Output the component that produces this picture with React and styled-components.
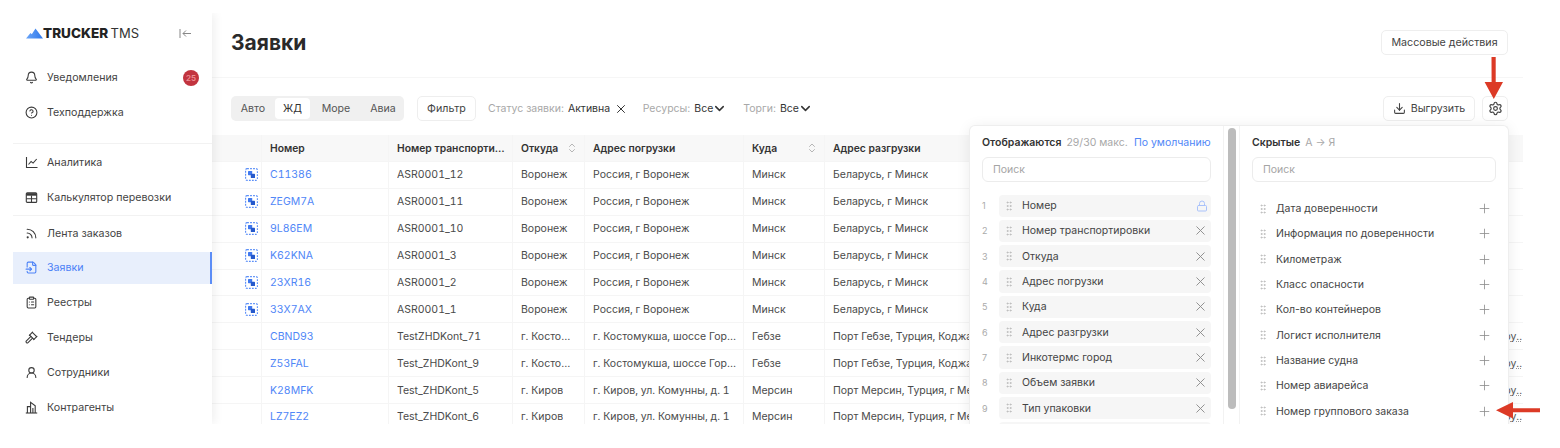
import React from "react";
import styled, { createGlobalStyle } from "styled-components";
import {
  Bell,
  ChevronDown,
  ChevronsUpDown,
  CircleHelp,
  ClipboardList,
  Download,
  FileInput,
  Gavel,
  GripVertical,
  Lock,
  Plus,
  Rss,
  Settings,
  UserRound,
  X,
} from "lucide-react";

function ChartIcon({ size }) {
  return (
    <svg width={size} height={size} viewBox="0 0 13 13" fill="none" stroke="currentColor" strokeWidth="1.1">
      <path d="M1.5 1v10.5h11" />
      <path d="M3.5 8.5l2.6-3 2 1.6 3.6-4.1" />
    </svg>
  );
}

function TableIcon({ size }) {
  return (
    <svg width={size} height={size} viewBox="0 0 13 13" fill="none" stroke="currentColor" strokeWidth="1.1">
      <rect x="1.3" y="1.8" width="10.4" height="9.6" rx="1" />
      <path d="M1.3 3.4h10.4" strokeWidth="2.6" />
      <path d="M1.3 7.8h10.4M6.5 4.5v6.9" />
    </svg>
  );
}

function BuildingIcon({ size }) {
  return (
    <svg width={size} height={size} viewBox="0 0 13 13" fill="none" stroke="currentColor" strokeWidth="1.1">
      <path d="M0.8 12h11.4" />
      <path d="M2.4 12V5.6h3.2" />
      <path d="M5.6 12V1.4l4.6 3.4V12" />
      <path d="M7.9 7v5" />
    </svg>
  );
}

const nav = [
  [{ label: "Уведомления", icon: Bell, badge: 25 }, { label: "Техподдержка", icon: CircleHelp }],
  [{ label: "Аналитика", icon: ChartIcon }, { label: "Калькулятор перевозки", icon: TableIcon }],
  [
    { label: "Лента заказов", icon: Rss },
    { label: "Заявки", icon: FileInput, active: true },
    { label: "Реестры", icon: ClipboardList },
    { label: "Тендеры", icon: Gavel },
    { label: "Сотрудники", icon: UserRound },
    { label: "Контрагенты", icon: BuildingIcon },
  ],
];

const voronezh = ["Воронеж", "Россия, г Воронеж", "Минск", "Беларусь, г Минск"];
const rows = [
  ["C11386", "ASR0001_12", ...voronezh, true],
  ["ZEGM7A", "ASR0001_11", ...voronezh, true],
  ["9L86EM", "ASR0001_10", ...voronezh, true],
  ["K62KNA", "ASR0001_3", ...voronezh, true],
  ["23XR16", "ASR0001_2", ...voronezh, true],
  ["33X7AX", "ASR0001_1", ...voronezh, true],
  ["CBND93", "TestZHDKont_71", "г. Костомукша", "г. Костомукша, шоссе Горняков", "Гебзе", "Порт Гебзе, Турция, Коджаэли", false, "ру.."],
  ["Z53FAL", "Test_ZHDKont_9", "г. Костомукша", "г. Костомукша, шоссе Горняков", "Гебзе", "Порт Гебзе, Турция, Коджаэли", false, "ру.."],
  ["K28MFK", "Test_ZHDKont_5", "г. Киров", "г. Киров, ул. Комунны, д. 1", "Мерсин", "Порт Мерсин, Турция, г Мерсин", false, "ру.."],
  ["LZ7EZ2", "Test_ZHDKont_6", "г. Киров", "г. Киров, ул. Комунны, д. 1", "Мерсин", "Порт Мерсин, Турция, г Мерсин", false, "ру.."],
];

const shown = ["Номер", "Номер транспортировки", "Откуда", "Адрес погрузки", "Куда", "Адрес разгрузки", "Инкотермс город", "Объем заявки", "Тип упаковки", "Вес"];
const hidden = ["Дата доверенности", "Информация по доверенности", "Километраж", "Класс опасности", "Кол-во контейнеров", "Логист исполнителя", "Название судна", "Номер авиарейса", "Номер группового заказа"];

const GlobalStyle = createGlobalStyle`
  html, body {
    margin: 0;
    background: #fff;
    font-family: "Inter", "Liberation Sans", sans-serif;
    color: #3f3f3f;
  }
  * { box-sizing: border-box; }
`;

const Shell = styled.div`
  position: relative;
  width: 1560px;
  height: 448px;
  padding: 13px 37px 24px 0;
  overflow: hidden;
`;

const Frame = styled.div`
  display: flex;
  height: 411px;
  overflow: hidden;
`;

const Sidebar = styled.aside`
  flex: 0 0 212px;
  padding-left: 13px;
  background: #fff;
  box-shadow: 2px 0 10px rgba(0, 0, 0, 0.07);
  position: relative;
  z-index: 2;
`;

const LogoRow = styled.div`
  display: flex;
  align-items: center;
  height: 40px;
  padding: 0 20px 0 13px;
`;

const LogoText = styled.span`
  font-size: 13.5px;
  font-weight: 800;
  color: #222;
`;

const LogoLight = styled.span`
  margin-left: 2.5px;
  font-size: 13px;
  font-weight: 400;
  color: #333;
`;

const Collapse = styled.div`
  margin-left: auto;
  display: flex;
  color: #888;
`;

const NavGroup = styled.div`
  padding: ${(p) => p.$pad || "0"};
  border-bottom: ${(p) => (p.$line ? "1px solid #f2f2f2" : "none")};
`;

const NavItem = styled.div`
  display: flex;
  align-items: center;
  height: ${(p) => (p.$active ? "32px" : "34.8px")};
  margin: ${(p) => (p.$active ? "1.4px 0" : "0")};
  padding-left: 12px;
  gap: 9px;
  font-size: 10.66px;
  color: ${(p) => (p.$active ? "#4c82f7" : "#444")};
  background: ${(p) => (p.$active ? "#e8effc" : "transparent")};
  border-right: ${(p) => (p.$active ? "2px solid #5c8df6" : "none")};

  svg {
    flex: none;
    color: ${(p) => (p.$active ? "#4c82f7" : "#3a3a3a")};
  }
`;

const Badge = styled.span`
  margin-left: auto;
  margin-right: 13px;
  width: 16px;
  height: 16px;
  border-radius: 50%;
  background: #c2343f;
  color: #ee8f94;
  font-size: 8px;
  font-weight: 600;
  display: flex;
  align-items: center;
  justify-content: center;
`;

const Main = styled.main`
  position: relative;
  flex: 1;
  min-width: 0;
`;

const TitleBar = styled.header`
  display: flex;
  align-items: center;
  justify-content: space-between;
  height: 65px;
  padding: 0 15px 6px 19px;
  border-bottom: 1px solid #f6f6f6;
`;

const Title = styled.h1`
  margin: 0;
  font-size: 21px;
  font-weight: 700;
  color: #2a2a2a;
`;

const Button = styled.button`
  display: inline-flex;
  align-items: center;
  justify-content: center;
  gap: 5px;
  height: 25px;
  padding: 0;
  width: ${(p) => p.$width}px;
  border: 1px solid #eeeeee;
  border-radius: 5px;
  background: #fff;
  font-family: inherit;
  font-size: 10.7px;
  color: #444;
`;

const Toolbar = styled.div`
  display: flex;
  align-items: center;
  height: 57px;
  padding: 4px 15px 0 19px;
`;

const Segments = styled.div`
  display: flex;
  align-items: center;
  width: 173px;
  height: 25px;
  padding: 2px 0;
  margin-right: 13px;
  border-radius: 5px;
  background: #f0f0f0;
`;

const Segment = styled.span`
  width: ${(p) => p.$width}px;
  height: 21px;
  display: flex;
  align-items: center;
  justify-content: center;
  font-size: 10.6px;
  color: ${(p) => (p.$active ? "#333" : "#555")};
  border-radius: 4px;
  background: ${(p) => (p.$active ? "#fff" : "transparent")};
`;

const FilterItem = styled.span`
  display: inline-flex;
  align-items: center;
  margin-left: ${(p) => p.$gap}px;
  font-size: 10.5px;
  color: #a8a8a8;
  white-space: nowrap;
`;

const FilterValue = styled.span`
  margin-left: 4px;
  margin-right: ${(p) => p.$after}px;
  color: #333;
`;

const ToolbarEnd = styled.div`
  margin-left: auto;
  display: flex;
  gap: 7px;
`;

const Table = styled.div`
  overflow: hidden;
`;

const Row = styled.div`
  display: grid;
  grid-template-columns: 50px 127px 124px 72px 159px 81px 1fr 60px;
  height: ${(p) => (p.$head ? "27px" : "26.9px")};
  border-bottom: 1px solid #f5f5f5;
  background: ${(p) => (p.$head ? "#f8f8f8" : "#fff")};
`;

const Cell = styled.div`
  display: flex;
  align-items: center;
  justify-content: ${(p) => (p.$spread ? "space-between" : "flex-start")};
  min-width: 0;
  padding: 0 6px 0 8px;
  border-right: 1px solid #f5f5f5;
  font-size: ${(p) => (p.$head ? "10.3px" : "10.5px")};
  font-variant-numeric: tabular-nums;
  font-weight: ${(p) => (p.$head ? 600 : 400)};
  color: ${(p) => (p.$link ? "#4f86f7" : p.$head ? "#333" : "#4a4a4a")};
`;

const Clip = styled.span`
  overflow: hidden;
  white-space: nowrap;
  text-overflow: ellipsis;
`;

const TailCell = styled(Cell)`
  justify-content: flex-end;
  padding: 0 1px 0 0;
  border-right: none;
`;

const Tail = styled.span`
  text-decoration: underline dotted #999;
  color: #555;
`;

const IconCell = styled(Cell)`
  justify-content: flex-end;
  padding-right: 3px;
`;

const Popup = styled.section`
  position: absolute;
  top: 111.5px;
  left: 756.5px;
  width: 540px;
  height: 300px;
  display: flex;
  background: #fff;
  border: 1px solid #eeeeee;
  border-bottom: none;
  border-radius: 6px 6px 0 0;
  box-shadow: 0 2px 14px rgba(0, 0, 0, 0.08);
  z-index: 3;
`;

const Pane = styled.div`
  flex: 0 0 ${(p) => p.$width}px;
  padding: ${(p) => p.$pad};
  overflow: hidden;
`;

const PaneHead = styled.div`
  display: flex;
  align-items: center;
  height: 16px;
  font-size: 10.5px;
  white-space: nowrap;
`;

const PaneTitle = styled.strong`
  font-weight: 600;
  color: #333;
`;

const Muted = styled.span`
  margin-left: 5px;
  color: #a8a8a8;
`;

const ResetLink = styled.span`
  margin-left: auto;
  color: #4f86f7;
`;

const Search = styled.div`
  display: flex;
  align-items: center;
  height: 25px;
  margin: 6px 0 ${(p) => p.$after}px;
  padding-left: 10px;
  border: 1px solid #ececec;
  border-radius: 6px;
  font-size: 10.5px;
  color: #a5a5a5;
`;

const ColumnList = styled.div`
  display: flex;
  flex-direction: column;
  gap: 3px;
`;

const ColumnRow = styled.div`
  display: flex;
  align-items: center;
  height: 22.33px;
  flex: none;
`;

const ColumnIndex = styled.span`
  flex: 0 0 17px;
  font-size: 9px;
  color: #aaa;
`;

const ColumnChip = styled.div`
  flex: 1;
  min-width: 0;
  height: 100%;
  display: flex;
  align-items: center;
  gap: 7px;
  padding: ${(p) => (p.$plain ? "0 4px 0 5px" : "0 3px 0 4px")};
  font-size: 10.5px;
  color: #444;
  border-radius: 4px;
  background: ${(p) => (p.$plain ? "transparent" : "#f6f6f6")};
`;

const Trailing = styled.span`
  margin-left: auto;
  display: flex;
  color: ${(p) => p.$color || "#8c8c8c"};
`;

const ScrollGutter = styled.div`
  flex: 0 0 17px;
  padding: 2px 3px 16px 4px;
  border-left: 1px solid #f2f2f2;
  border-right: 1px solid #f2f2f2;
`;

const ScrollThumb = styled.div`
  height: 100%;
  border-radius: 5px;
  background: #bcbcbc;
`;

const ArrowLayer = styled.svg`
  position: absolute;
  inset: 0;
  z-index: 5;
  pointer-events: none;
`;

function Logo() {
  return (
    <svg width="17" height="11" viewBox="0 0 17 11">
      <defs>
        <linearGradient id="peak" x1="0" x2="1" y1="0" y2="0">
          <stop offset="0" stopColor="#6aa5f8" />
          <stop offset="1" stopColor="#2f78ea" />
        </linearGradient>
      </defs>
      <path d="M0 10.5 L4.5 5 L5.8 6.2 L9.5 0.5 L17 10.5 Z" fill="url(#peak)" />
    </svg>
  );
}

function CollapseIcon() {
  return (
    <svg width="13" height="11" viewBox="0 0 13 11" fill="none" stroke="currentColor" strokeWidth="1">
      <path d="M1 1v9M12 5.5H4M7 2.5l-3 3 3 3" />
    </svg>
  );
}

function GroupIcon() {
  return (
    <svg width="13" height="13" viewBox="0 0 13 13" fill="none">
      <rect x="0.6" y="0.6" width="11.8" height="11.8" rx="1.5" stroke="#5b8ff8" strokeWidth="1.1" strokeDasharray="1.8 1.2" />
      <rect x="3" y="3" width="4.2" height="4.2" rx="0.6" fill="#3f78ee" />
      <rect x="5.8" y="5.8" width="4.2" height="4.2" rx="0.6" fill="#2559cc" />
    </svg>
  );
}

function NavEntry({ item }) {
  const Icon = item.icon;
  return (
    <NavItem $active={item.active}>
      <Icon size={13} strokeWidth={2} />
      {item.label}
      {item.badge && <Badge>{item.badge}</Badge>}
    </NavItem>
  );
}

export default function App() {
  return (
    <Shell>
      <GlobalStyle />
      <Frame>
        <Sidebar>
          <LogoRow>
            <Logo />
            <LogoText>TRUCKER</LogoText>
            <LogoLight>TMS</LogoLight>
            <Collapse>
              <CollapseIcon />
            </Collapse>
          </LogoRow>
          <NavGroup $pad="7.3px 0 13.2px" $line>
            {nav[0].map((item) => (
              <NavEntry key={item.label} item={item} />
            ))}
          </NavGroup>
          <NavGroup $line $pad="1px 0 0">
            {nav[1].map((item) => (
              <NavEntry key={item.label} item={item} />
            ))}
          </NavGroup>
          <NavGroup>
            {nav[2].map((item) => (
              <NavEntry key={item.label} item={item} />
            ))}
          </NavGroup>
        </Sidebar>

        <Main>
          <TitleBar>
            <Title>Заявки</Title>
            <Button $width={127}>Массовые действия</Button>
          </TitleBar>

          <Toolbar>
            <Segments>
              <Segment $width={44}>Авто</Segment>
              <Segment $width={35} $active>ЖД</Segment>
              <Segment $width={52}>Море</Segment>
              <Segment $width={42}>Авиа</Segment>
            </Segments>
            <Button $width={59}>Фильтр</Button>
            <FilterItem $gap={12}>
              Статус заявки:<FilterValue $after={4}>Активна</FilterValue>
              <X size={14} color="#333" strokeWidth={1.7} />
            </FilterItem>
            <FilterItem $gap={14.5}>
              Ресурсы:<FilterValue $after={-1.5}>Все</FilterValue>
              <ChevronDown size={15} color="#333" strokeWidth={2.4} />
            </FilterItem>
            <FilterItem $gap={16.5}>
              Торги:<FilterValue $after={-1.5}>Все</FilterValue>
              <ChevronDown size={15} color="#333" strokeWidth={2.4} />
            </FilterItem>
            <ToolbarEnd>
              <Button $width={92}>
                <Download size={13} strokeWidth={2} />
                Выгрузить
              </Button>
              <Button $width={26}>
                <Settings size={15} strokeWidth={1.9} />
              </Button>
            </ToolbarEnd>
          </Toolbar>

          <Table>
            <Row $head>
              <Cell $head />
              <Cell $head>Номер</Cell>
              <Cell $head><Clip>Номер транспортировки</Clip></Cell>
              <Cell $head $spread>Откуда<ChevronsUpDown size={12} color="#999" strokeWidth={1.4} /></Cell>
              <Cell $head>Адрес погрузки</Cell>
              <Cell $head $spread>Куда<ChevronsUpDown size={12} color="#999" strokeWidth={1.4} /></Cell>
              <Cell $head>Адрес разгрузки</Cell>
              <TailCell $head />
            </Row>
            {rows.map((row) => (
              <Row key={row[0]}>
                <IconCell>{row[6] && <GroupIcon />}</IconCell>
                <Cell $link>{row[0]}</Cell>
                <Cell><Clip>{row[1]}</Clip></Cell>
                <Cell><Clip>{row[2]}</Clip></Cell>
                <Cell><Clip>{row[3]}</Clip></Cell>
                <Cell>{row[4]}</Cell>
                <Cell><Clip>{row[5]}</Clip></Cell>
                <TailCell>{row[7] && <Tail>{row[7]}</Tail>}</TailCell>
              </Row>
            ))}
          </Table>

          <Popup>
            <Pane $width={253} $pad="9px 12px 0 12.5px">
              <PaneHead>
                <PaneTitle>Отображаются</PaneTitle>
                <Muted>29/30 макс.</Muted>
                <ResetLink>По умолчанию</ResetLink>
              </PaneHead>
              <Search $after={13}>Поиск</Search>
              <ColumnList>
                {shown.map((name, i) => (
                  <ColumnRow key={name}>
                    <ColumnIndex>{i + 1}</ColumnIndex>
                    <ColumnChip>
                      <GripVertical size={12} color="#bdbdbd" />
                      {name}
                      <Trailing $color={i === 0 ? "#a9c2fb" : undefined}>
                        {i === 0 ? <Lock size={12} strokeWidth={2} /> : <X size={15} strokeWidth={1.5} />}
                      </Trailing>
                    </ColumnChip>
                  </ColumnRow>
                ))}
              </ColumnList>
            </Pane>
            <ScrollGutter>
              <ScrollThumb />
            </ScrollGutter>
            <Pane $width={268} $pad="9px 12px 0 12.5px">
              <PaneHead>
                <PaneTitle>Скрытые</PaneTitle>
                <Muted>А → Я</Muted>
              </PaneHead>
              <Search $after={16}>Поиск</Search>
              <ColumnList>
                {hidden.map((name) => (
                  <ColumnRow key={name}>
                    <ColumnChip $plain>
                      <GripVertical size={12} color="#bdbdbd" />
                      {name}
                      <Trailing><Plus size={15} strokeWidth={1.3} /></Trailing>
                    </ColumnChip>
                  </ColumnRow>
                ))}
              </ColumnList>
            </Pane>
          </Popup>
        </Main>
      </Frame>

      <ArrowLayer width="1560" height="448" viewBox="0 0 1560 448">
        <path d="M1491.5 57h4.2v25h7.3l-9.2 17-9.2-17h7z" fill="#dc3a26" />
        <path d="M1540 408.3v3.9h-27v6.3l-17-8.2 17-8.4v6.4z" fill="#dc3a26" />
      </ArrowLayer>
    </Shell>
  );
}
